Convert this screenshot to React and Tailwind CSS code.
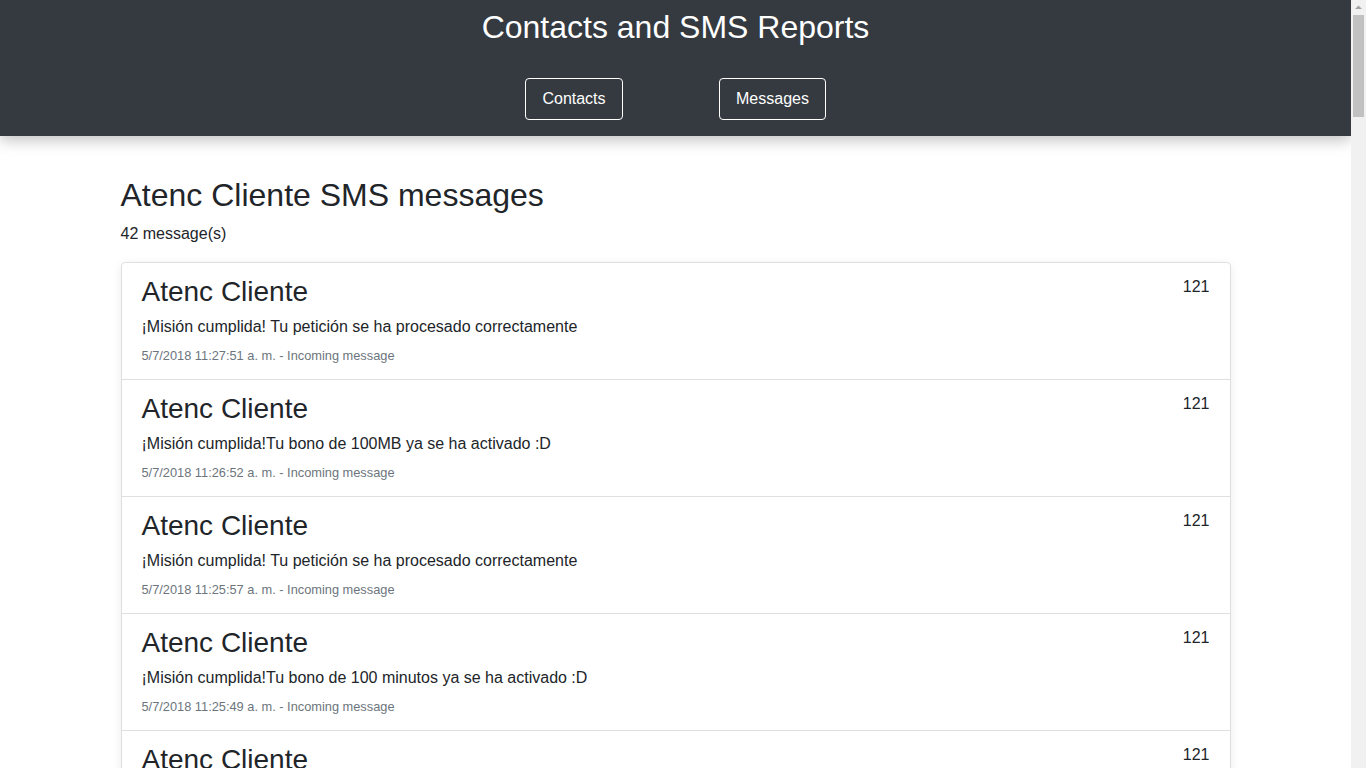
const samples = [
  { text: "¡Misión cumplida! Tu petición se ha procesado correctamente", date: "5/7/2018 11:27:51 a. m." },
  { text: "¡Misión cumplida!Tu bono de 100MB ya se ha activado :D", date: "5/7/2018 11:26:52 a. m." },
  { text: "¡Misión cumplida! Tu petición se ha procesado correctamente", date: "5/7/2018 11:25:57 a. m." },
  { text: "¡Misión cumplida!Tu bono de 100 minutos ya se ha activado :D", date: "5/7/2018 11:25:49 a. m." },
  { text: "¡Misión cumplida! Tu petición se ha procesado correctamente", date: "5/7/2018 11:24:10 a. m." },
  { text: "Tu saldo principal es de 2.50 CUC. Vence el 12/9/2018", date: "4/7/2018 9:14:03 p. m." },
];

const messages = Array.from({ length: 42 }, (_, i) => ({
  id: i,
  sender: "Atenc Cliente",
  number: "121",
  ...samples[i % samples.length],
}));

// the window's scrollbar as the screenshot shows it
const ScrollBar = () => (
  <div className="fixed top-0 right-0 w-[15px] h-screen bg-[#f1f1f1] z-20">
    <svg width="15" height="15" viewBox="0 0 15 15" className="block">
      <path d="M4 9 L7.5 5.5 L11 9 Z" fill="#a3a3a3" />
    </svg>
    <div className="mx-auto mt-0 w-[11px] h-[102px] bg-[#c1c1c1]" />
  </div>
);

const App = () => {
  return (
    <div className="min-h-screen bg-white pr-[15px] text-[#212529] font-['Liberation_Sans',Arial,sans-serif]">
      <ScrollBar />
      <header className="bg-[#343a40] h-[136px] shadow-[0_4px_14px_rgba(0,0,0,0.25)] relative z-10 pt-2">
        <h1 className="text-white text-[32px] leading-[38px] text-center">
          Contacts and SMS Reports
        </h1>
        <nav className="flex justify-center gap-[96px] mt-[32px]">
          <button className="w-[98px] h-[42px] border border-white rounded text-white text-base">
            Contacts
          </button>
          <button className="w-[107px] h-[42px] border border-white rounded text-white text-base">
            Messages
          </button>
        </nav>
      </header>

      <main className="max-w-[1140px] mx-auto px-[15px] pt-[40px] pb-10">
        <h2 className="text-[32px] leading-[38px]">Atenc Cliente SMS messages</h2>
        <p className="text-base leading-6 mt-2">{messages.length} message(s)</p>

        <div className="mt-4 border border-[#dfdfdf] rounded shadow-[0_2px_10px_rgba(0,0,0,0.08)]">
          {messages.map((m, i) => (
            <div
              key={m.id}
              className={`flex justify-between px-5 pt-3 pb-[14px] ${
                i < messages.length - 1 ? "border-b border-[#dfdfdf]" : ""
              }`}
            >
              <div>
                <h3 className="text-[28px] leading-[34px]">{m.sender}</h3>
                <p className="text-base leading-6 mt-[6px]">{m.text}</p>
                <p className="text-[12.8px] leading-[19px] mt-[7px] text-[#6c757d]">
                  {m.date} - Incoming message
                </p>
              </div>
              <span className="text-base leading-6">{m.number}</span>
            </div>
          ))}
        </div>
      </main>
    </div>
  );
};

export default App;
